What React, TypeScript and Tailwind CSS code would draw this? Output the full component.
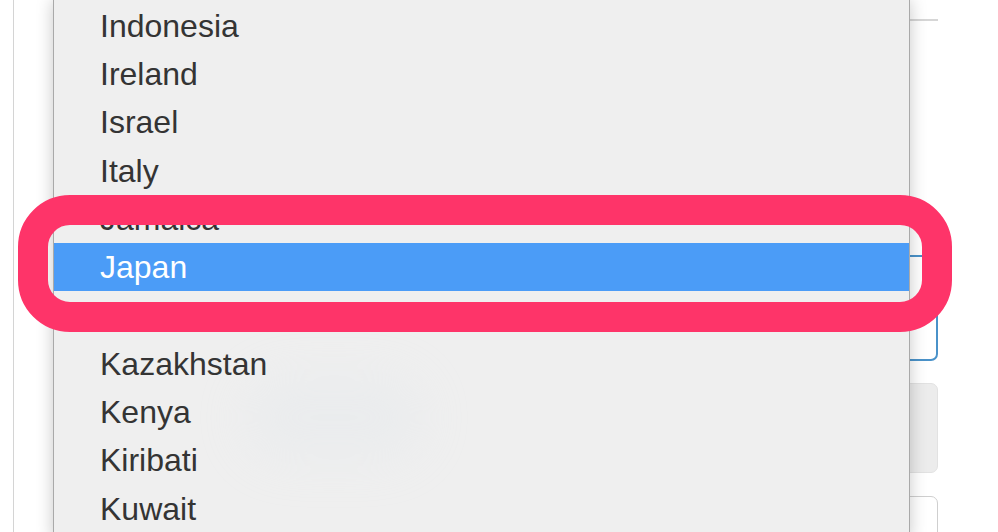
import React from "react";

const countries = [
  "Indonesia",
  "Ireland",
  "Israel",
  "Italy",
  "Jamaica",
  "Japan",
  "Jordan",
  "Kazakhstan",
  "Kenya",
  "Kiribati",
  "Kuwait",
];

export default function App() {
  return (
    <div
      className="relative w-[998px] h-[532px] overflow-hidden bg-white"
      style={{ fontFamily: '"Liberation Sans", Arial, sans-serif' }}
    >
      {/* underlying page */}
      <div className="ml-[13px] mr-[60px] h-full border-l border-[#d4d4d4] pl-[60px] flex flex-col">
        <div className="shrink-0 h-[21px] border-b-2 border-[#d6d6d6]" />
        <div className="shrink-0 mt-[234px] h-[106px] rounded-[7px] border-2 border-[#4a92c9] bg-white" />
        <div className="shrink-0 mt-[22px] h-[90px] rounded-[7px] border border-[#e2e2e2] bg-[#ececec]" />
        <div className="shrink-0 mt-[23px] h-[60px] rounded-[7px] border border-[#cfcfcf] bg-white" />
      </div>

      {/* dropdown list overlay */}
      <div className="absolute left-[53px] top-0 w-[857px] h-[540px] bg-[#efefef] border-l border-r border-[#a9a9a9] shadow-[0_0_16px_rgba(0,0,0,0.22)]">
        <div className="absolute left-[190px] top-[375px] w-[180px] h-[85px] rounded-full bg-[#dde4ea] opacity-25 blur-xl" />
        <ul className="relative pt-[1.5px]">
          {countries.map((c) => (
            <li
              key={c}
              className={
                "h-[48.3px] flex items-center pl-[46px] text-[32px] leading-none " +
                (c === "Japan"
                  ? "bg-[#4b9cf7] text-white"
                  : "text-[#343434]")
              }
            >
              {c}
            </li>
          ))}
        </ul>
      </div>

      {/* highlight ring annotation */}
      <div className="absolute left-[18px] top-[195px] w-[934px] h-[137px] rounded-[52px] border-[30px] border-[#fe3469]" />
    </div>
  );
}
